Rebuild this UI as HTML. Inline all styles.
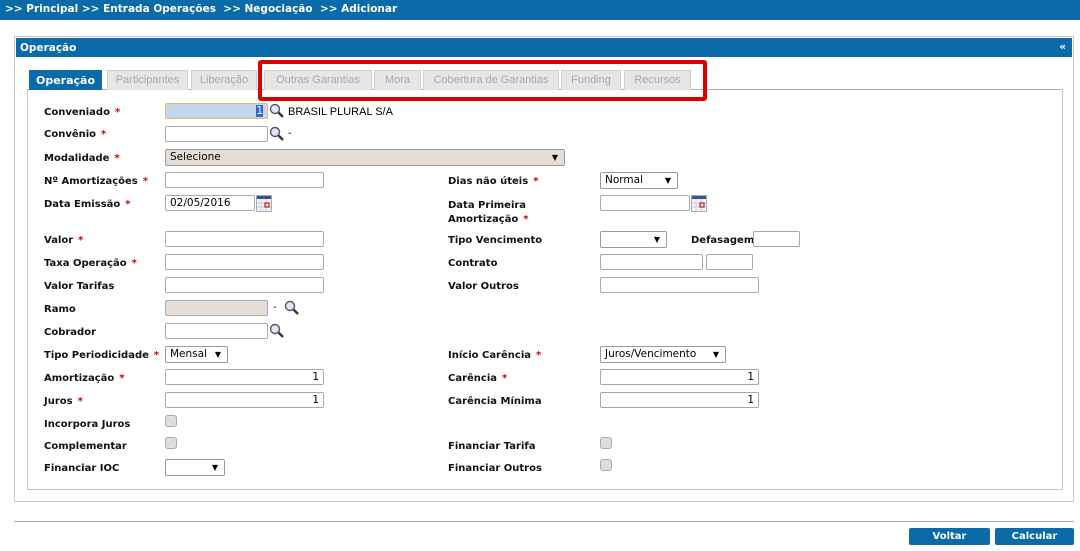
<!DOCTYPE html>
<html><head><meta charset="utf-8"><style>
*{box-sizing:border-box;margin:0;padding:0}
body{width:1080px;height:551px;background:#fff;position:relative;overflow:hidden;font-family:"DejaVu Sans","Liberation Sans",sans-serif;font-size:10px}
.a{position:absolute}
.top{left:0;top:0;width:1080px;height:20px;background:#0b6aa8;color:#fff;font-weight:bold;font-size:10.5px;padding:3px 0 0 5px;white-space:pre}
.panel{left:14px;top:36px;width:1060px;height:466px;border:1px solid #c8c8c8}
.ph{left:16px;top:38px;width:1056px;height:19px;background:#0b6aa8;color:#fff;font-weight:bold;font-size:10.5px;padding:4px 0 0 4px}
.tab{top:70px;height:20px;background:#e6e6e6;border:1px solid #cfcfcf;border-bottom:none;color:#a8a8a8;font-family:"Liberation Sans",sans-serif;font-size:11px;text-align:center;padding-top:3px}
.tab.on{background:#0b6aa8;color:#fff;font-weight:bold;font-family:"DejaVu Sans",sans-serif;border-color:#0b6aa8}
.box{left:27px;top:89px;width:1036px;height:401px;border:1px solid #c8c8c8;border-top-color:#b0b0b0}
.red{left:258px;top:60px;width:449px;height:41px;border:4px solid #d00;border-radius:3px}
.l{font-weight:bold;color:#111;font-size:10px;white-space:nowrap;margin-top:2px}
.l i{color:#c00;font-style:normal;margin-left:5px}
.in{height:16px;border:1px solid #a9a9a9;border-radius:2px;background:#fff;font-family:"DejaVu Sans",sans-serif;font-size:10.5px;padding:0 4px;line-height:14px;white-space:nowrap}
.r{text-align:right}
.sel{height:17px;border:1px solid #999;border-radius:2px;background:#fff;font-size:10.5px;padding:0 4px;line-height:15px}
.sel b{position:absolute;right:6px;top:0;font-size:8px}
.cb{width:12px;height:12px;border:1px solid #aaa;border-radius:3px;background:#ddd}
.mag{width:15px;height:15px}
.cal{width:16px;height:17px}
.btn{top:528px;height:17px;background:#0b6aa8;color:#fff;font-weight:bold;font-size:10px;text-align:center;border-radius:2px;line-height:17px}
</style></head><body>
<div class="a top">&gt;&gt; Principal &gt;&gt; Entrada Operações  &gt;&gt; Negociação  &gt;&gt; Adicionar</div>
<div class="a panel"></div>
<div class="a ph">Operação<span style="position:absolute;right:6px;top:3px">«</span></div>
<div class="a box"></div>
<div class="a tab on" style="left:29px;width:73px">Operação</div>
<div class="a tab" style="left:107px;width:81px">Participantes</div>
<div class="a tab" style="left:191px;width:66px">Liberação</div>
<div class="a tab" style="left:264px;width:108px">Outras Garantias</div>
<div class="a tab" style="left:374px;width:47px">Mora</div>
<div class="a tab" style="left:423px;width:136px">Cobertura de Garantias</div>
<div class="a tab" style="left:561px;width:60px">Funding</div>
<div class="a tab" style="left:624px;width:67px">Recursos</div>
<div class="a red"></div>

<svg width="0" height="0" style="position:absolute"><defs><symbol id="m" viewBox="0 0 15 15"><circle cx="6" cy="6" r="4.5" fill="#dfe9f3" stroke="#556" stroke-width="1.4"/><path d="M9.5 9.5L14 14" stroke="#333" stroke-width="2.4"/></symbol>
<symbol id="c" viewBox="0 0 16 17"><rect x="0.5" y="0.5" width="15" height="16" fill="#f4f4f8" stroke="#aab"/><rect x="1" y="1" width="14" height="3" fill="#35578a"/><path d="M1 8H15M1 12H15M5 4V16M10 4V16" stroke="#ccd" stroke-width="1"/><rect x="9" y="8" width="4" height="4" fill="none" stroke="#b33" stroke-width="1.3"/></symbol></defs></svg>

<div class="a l" style="left:44px;top:105px">Conveniado<i>*</i></div>
<div class="a in r" style="left:165px;top:103px;width:103px;background:#c5d7ea;border-color:#e5b96a"><span style="background:#36c;color:#fff">1</span></div>
<svg class="a mag" style="left:269px;top:103px"><use href="#m"/></svg>
<div class="a" style="left:288px;top:106px;font-family:'Liberation Sans',sans-serif;font-size:11px">BRASIL PLURAL S/A</div>

<div class="a l" style="left:44px;top:127px">Convênio<i>*</i></div>
<div class="a in" style="left:165px;top:126px;width:103px"></div>
<svg class="a mag" style="left:269px;top:126px"><use href="#m"/></svg>
<div class="a" style="left:288px;top:128px">-</div>

<div class="a l" style="left:44px;top:151px">Modalidade<i>*</i></div>
<div class="a sel" style="left:165px;top:149px;width:400px;background:#e5ddd6">Selecione<b>▼</b></div>

<div class="a l" style="left:44px;top:174px">Nº Amortizações<i>*</i></div>
<div class="a in" style="left:165px;top:172px;width:159px"></div>
<div class="a l" style="left:448px;top:174px">Dias não úteis<i>*</i></div>
<div class="a sel" style="left:600px;top:172px;width:78px">Normal<b>▼</b></div>

<div class="a l" style="left:44px;top:197px">Data Emissão<i>*</i></div>
<div class="a in" style="left:165px;top:195px;width:90px">02/05/2016</div>
<svg class="a cal" style="left:256px;top:195px"><use href="#c"/></svg>
<div class="a l" style="left:448px;top:197px;line-height:14px">Data Primeira<br>Amortização<i>*</i></div>
<div class="a in" style="left:600px;top:195px;width:90px"></div>
<svg class="a cal" style="left:691px;top:195px"><use href="#c"/></svg>

<div class="a l" style="left:44px;top:233px">Valor<i>*</i></div>
<div class="a in" style="left:165px;top:231px;width:159px"></div>
<div class="a l" style="left:448px;top:233px">Tipo Vencimento</div>
<div class="a sel" style="left:600px;top:231px;width:67px"><b>▼</b></div>
<div class="a l" style="left:691px;top:233px">Defasagem</div>
<div class="a in" style="left:753px;top:231px;width:47px"></div>

<div class="a l" style="left:44px;top:256px">Taxa Operação<i>*</i></div>
<div class="a in" style="left:165px;top:254px;width:159px"></div>
<div class="a l" style="left:448px;top:256px">Contrato</div>
<div class="a in" style="left:600px;top:254px;width:103px"></div>
<div class="a in" style="left:706px;top:254px;width:47px"></div>

<div class="a l" style="left:44px;top:279px">Valor Tarifas</div>
<div class="a in" style="left:165px;top:277px;width:159px"></div>
<div class="a l" style="left:448px;top:279px">Valor Outros</div>
<div class="a in" style="left:600px;top:277px;width:159px"></div>

<div class="a l" style="left:44px;top:302px">Ramo</div>
<div class="a in" style="left:165px;top:300px;width:103px;background:#e5ddd6"></div>
<div class="a" style="left:273px;top:302px">-</div>
<svg class="a mag" style="left:284px;top:300px"><use href="#m"/></svg>

<div class="a l" style="left:44px;top:325px">Cobrador</div>
<div class="a in" style="left:165px;top:323px;width:103px"></div>
<svg class="a mag" style="left:269px;top:323px"><use href="#m"/></svg>

<div class="a l" style="left:44px;top:348px">Tipo Periodicidade<i>*</i></div>
<div class="a sel" style="left:165px;top:346px;width:63px">Mensal<b>▼</b></div>
<div class="a l" style="left:448px;top:348px">Início Carência<i>*</i></div>
<div class="a sel" style="left:600px;top:346px;width:126px">Juros/Vencimento<b>▼</b></div>

<div class="a l" style="left:44px;top:371px">Amortização<i>*</i></div>
<div class="a in r" style="left:165px;top:369px;width:159px">1</div>
<div class="a l" style="left:448px;top:371px">Carência<i>*</i></div>
<div class="a in r" style="left:600px;top:369px;width:159px">1</div>

<div class="a l" style="left:44px;top:394px">Juros<i>*</i></div>
<div class="a in r" style="left:165px;top:392px;width:159px">1</div>
<div class="a l" style="left:448px;top:394px">Carência Mínima</div>
<div class="a in r" style="left:600px;top:392px;width:159px">1</div>

<div class="a l" style="left:44px;top:417px">Incorpora Juros</div>
<div class="a cb" style="left:165px;top:415px"></div>

<div class="a l" style="left:44px;top:439px">Complementar</div>
<div class="a cb" style="left:165px;top:437px"></div>
<div class="a l" style="left:448px;top:439px">Financiar Tarifa</div>
<div class="a cb" style="left:600px;top:437px"></div>

<div class="a l" style="left:44px;top:461px">Financiar IOC</div>
<div class="a sel" style="left:165px;top:459px;width:60px"><b>▼</b></div>
<div class="a l" style="left:448px;top:461px">Financiar Outros</div>
<div class="a cb" style="left:600px;top:459px"></div>

<div class="a" style="left:14px;top:521px;width:1060px;height:1px;background:#aaa"></div>
<div class="a btn" style="left:909px;width:81px">Voltar</div>
<div class="a btn" style="left:995px;width:79px">Calcular</div>
</body></html>
